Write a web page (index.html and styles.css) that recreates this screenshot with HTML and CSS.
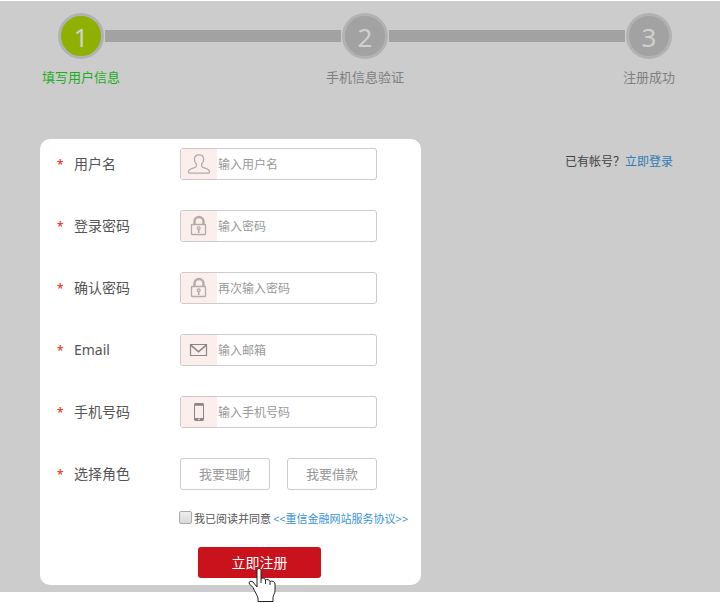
FILE: index.html
```html
<!DOCTYPE html>
<html lang="zh-CN">
<head>
<meta charset="utf-8">
<title>用户注册</title>
<link rel="stylesheet" href="styles.css">
</head>
<body>
<svg class="defs" aria-hidden="true">
  <symbol id="lock" viewBox="0 0 24 24">
    <path d="M7.500 10.500V7.500a4.500 4.500 0 0 1 9 0V10.500" stroke-width="2.400"/>
    <rect x="4.500" y="10.500" width="14" height="10" rx="0.500"/>
    <circle cx="11.700" cy="14.300" r="1.400"/>
    <path d="M11.700 15.500V19" stroke-width="1.600"/>
  </symbol>
</svg>
<main class="page">
  <ol class="steps">
    <li class="step active"><span class="circle">1</span><span class="caption">填写用户信息</span></li>
    <li class="bar" role="presentation"></li>
    <li class="step"><span class="circle">2</span><span class="caption">手机信息验证</span></li>
    <li class="bar" role="presentation"></li>
    <li class="step"><span class="circle">3</span><span class="caption">注册成功</span></li>
  </ol>
  <div class="content">
    <form class="panel">
      <div class="row">
        <span class="star">*</span><label class="name" for="user">用户名</label>
        <div class="field">
          <span class="icon"><svg viewBox="0 0 24 24"><path d="M12 2.800c-3 0-4.600 1.900-4.600 4.500 0 2 .8 3.600 2 4.700v1.500c0 1.300-.8 1.900-2.200 2.300-3 .9-5.700 1.500-5.700 4 0 1 .4 1.400 1.300 1.400h18.400c.9 0 1.300-.4 1.300-1.400 0-2.500-2.700-3.100-5.700-4-1.400-.4-2.200-1-2.200-2.300V12c1.200-1.100 2-2.700 2-4.700 0-2.600-1.600-4.500-4.600-4.500z"/></svg></span>
          <input id="user" type="text" placeholder="输入用户名">
        </div>
      </div>
      <div class="row">
        <span class="star">*</span><label class="name" for="pwd">登录密码</label>
        <div class="field">
          <span class="icon"><svg><use href="#lock"/></svg></span>
          <input id="pwd" type="password" placeholder="输入密码">
        </div>
      </div>
      <div class="row">
        <span class="star">*</span><label class="name" for="pwd2">确认密码</label>
        <div class="field">
          <span class="icon"><svg><use href="#lock"/></svg></span>
          <input id="pwd2" type="password" placeholder="再次输入密码">
        </div>
      </div>
      <div class="row">
        <span class="star">*</span><label class="name" for="email">Email</label>
        <div class="field">
          <span class="icon dark"><svg viewBox="0 0 24 24"><path d="M3.500 6.500h16v11h-16z" stroke-width="1.200"/><path d="M3.500 6.800l8 7 8-7" stroke-width="1.600"/></svg></span>
          <input id="email" type="email" placeholder="输入邮箱">
        </div>
      </div>
      <div class="row">
        <span class="star">*</span><label class="name" for="phone">手机号码</label>
        <div class="field">
          <span class="icon dark"><svg viewBox="0 0 24 24"><rect x="7.500" y="3.500" width="9" height="17" rx="1" stroke-width="1"/><path d="M7.500 4.500h9M7.500 19.300h9" stroke-width="2.400"/><path d="M11 19.300h2" stroke="#fdeeee" stroke-width="1"/></svg></span>
          <input id="phone" type="tel" placeholder="输入手机号码">
        </div>
      </div>
      <div class="row">
        <span class="star">*</span><span class="name">选择角色</span>
        <div class="roles">
          <button class="role" type="button">我要理财</button>
          <button class="role" type="button">我要借款</button>
        </div>
      </div>
      <div class="agree">
        <input id="agree" type="checkbox"><label for="agree">我已阅读并同意</label>
        <a href="#">&lt;&lt;重信金融网站服务协议&gt;&gt;</a>
      </div>
      <div class="action">
        <button class="submit" type="submit">立即注册</button>
        <svg class="cursor" viewBox="0 0 28 36" aria-hidden="true"><path d="M9 20V3.500C9 .8 13 .8 13 3.500V12c1.500-1.500 4-1 4.500 1 1.500-1 4-.5 4.500 1.500 2-1 5 0 5 2.500v6.500c0 3-2 5-2 7V34.500H10V31C9 28 7 25 5 20.500L1.500 17c-1.500-2.500 1.500-3.500 3.500-2L9 20z"/><path d="M13 12v4M17.500 13v4M22 14.500V18" fill="none"/></svg>
      </div>
    </form>
    <p class="login">已有帐号？<a href="#">立即登录</a></p>
  </div>
</main>
</body>
</html>
```
FILE: styles.css
```css
* { box-sizing: border-box; }

body {
  display: flow-root;
  min-height: 100vh;
  margin: 0;
  background: #fff;
  font-family: "Noto Sans", "Noto Sans CJK SC", sans-serif;
  font-size: 14px;
  color: #555;
}

button, input { font-family: inherit; }

a { color: #3a92dc; text-decoration: none; }

.defs { display: none; }

.page {
  margin: 1px 1px 11px 0;
  padding: 12px 47px 7px 40px;
  background: #ccc;
}

.steps {
  display: flex;
  margin: 0 1px 0 18px;
  padding: 0;
  list-style: none;
}

.step {
  display: flex;
  flex-direction: column;
  align-items: center;
  width: 46px;
  color: #808080;
}

.circle {
  width: 46px;
  height: 46px;
  border: 3px solid #b0b2b3;
  border-radius: 50%;
  background: #a2a2a2;
  color: #d0d0d0;
  font-size: 26px;
  line-height: 42px;
  text-align: center;
}

.caption {
  margin-top: 8px;
  font-size: 13px;
  line-height: 20px;
  white-space: nowrap;
}

.active { color: #1bae1b; }
.active .circle { background: #8fb000; }

.bar {
  flex: 1;
  height: 12px;
  margin: 17px 1px 0;
  background: #a2a2a2;
}

.content {
  display: flex;
  justify-content: space-between;
  align-items: flex-start;
  margin-top: 52px;
}

.panel {
  flex: 0 1 381px;
  padding: 9px 0 7px 17px;
  border-radius: 10px;
  background: #fff;
}

.row {
  display: flex;
  align-items: center;
  height: 32px;
  margin-bottom: 30px;
}

.star {
  width: 17px;
  padding-top: 2px;
  color: #e8452f;
  font-size: 12px;
  font-weight: 600;
  line-height: 16px;
}

.name {
  width: 106px;
  padding-bottom: 2px;
}

.field {
  display: flex;
  width: 197px;
  height: 32px;
  overflow: hidden;
  border: 1px solid #ccc;
  border-radius: 3px;
}

.icon {
  display: flex;
  align-items: center;
  justify-content: center;
  width: 36px;
  background: #fdeeee;
}

.icon svg {
  width: 24px;
  height: 24px;
  fill: none;
  stroke: #b3aaaa;
  stroke-width: 1.3;
}

.dark svg { stroke: #8c8686; }

.field input {
  flex: 1;
  min-width: 0;
  padding: 1px;
  border: 0;
  outline: 0;
  background: none;
  font-size: 12px;
  color: #555;
}

.field input::placeholder { color: #999; }

.roles { display: flex; gap: 17px; }

.role {
  width: 90px;
  height: 32px;
  padding: 0 0 2px;
  border: 1px solid #ccc;
  border-radius: 3px;
  background: #fff;
  color: #999;
  font-size: 13px;
}

.agree {
  display: flex;
  align-items: center;
  height: 16px;
  margin: -10px 0 0 122px;
  font-size: 11px;
  white-space: nowrap;
}

.agree input {
  appearance: none;
  width: 13px;
  height: 13px;
  margin: 0 2px 2px 0;
  border: 1px solid #aaa;
  border-radius: 2px;
  background: linear-gradient(#eee, #d8d8d8);
}

.agree a { margin-left: 2px; }

.action {
  position: relative;
  width: 123px;
  margin: 21px 0 0 141px;
}

.submit {
  display: block;
  width: 100%;
  height: 31px;
  padding: 0 0 1px;
  border: 0;
  border-radius: 3px;
  background: #c9121c;
  color: #fff;
  font-size: 14px;
}

.cursor {
  position: absolute;
  top: 20px;
  left: 50px;
  width: 28px;
  height: 36px;
  fill: #fff;
  stroke: #222;
  stroke-width: 1;
}

.login {
  margin: 13px 0 0;
  color: #444;
  font-size: 12px;
  line-height: 20px;
}

.login a { color: #2f7cb8; }
```
